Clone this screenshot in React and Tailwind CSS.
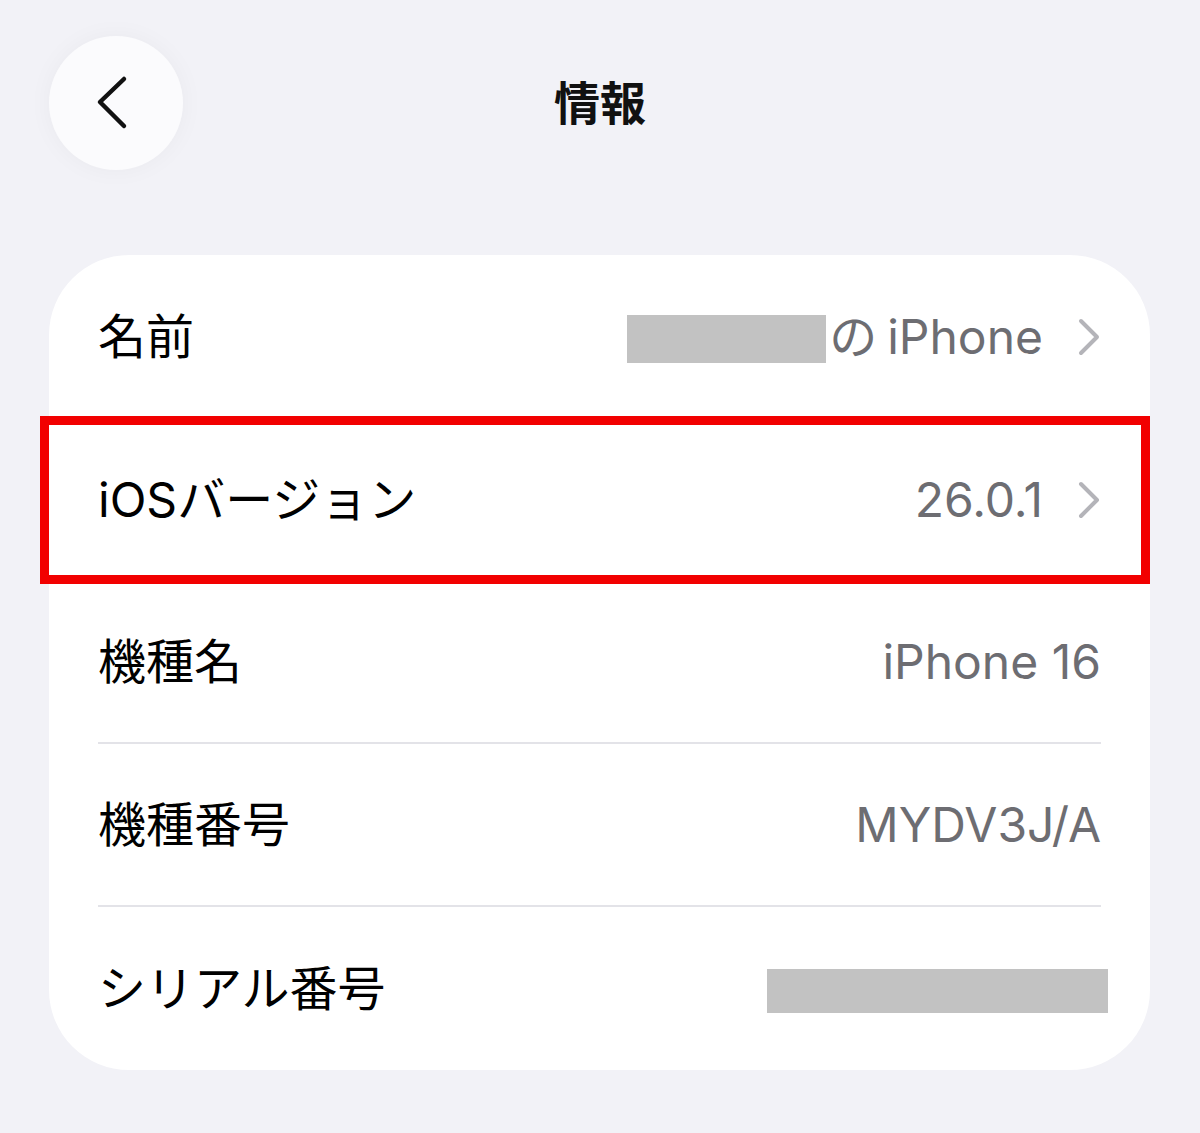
const font = { fontFamily: '"Inter", "Noto Sans CJK JP", sans-serif' };

function Chevron() {
  return (
    <svg width="24" height="38" viewBox="0 0 24 38" fill="none" stroke="#b4b4b9" strokeWidth="4" strokeLinecap="round" strokeLinejoin="round" className="ml-[34px] shrink-0">
      <polyline points="4,3 20,19 4,35" />
    </svg>
  );
}

function Row({ label, children, chevron, divider, highlight }) {
  return (
    <div className="relative h-[163px] px-[49px]">
      <div className={`flex h-full items-center justify-between ${divider ? 'border-b-2 border-[#e3e3e8]' : ''}`}>
        <span className="text-[48px] text-black">{label}</span>
        <div className="flex items-center">
          {children}
          {chevron && <Chevron />}
        </div>
      </div>
      {highlight && (
        <div className="absolute left-[-9px] right-0 top-[-2px] bottom-[-3px] border-[9px] border-[#f20000]" />
      )}
    </div>
  );
}

export default function App() {
  return (
    <div className="w-full h-[1133px] bg-[#f2f2f7] overflow-hidden" style={font}>
      {/* Header */}
      <div className="grid grid-cols-[1fr_auto_1fr] items-center pt-[36px] px-[49px]">
        <div>
          <button className="w-[134px] h-[134px] rounded-full bg-[#fbfbfd] flex items-center justify-center shadow-[0_0_24px_rgba(0,0,0,0.04)]">
            <svg width="40" height="56" viewBox="0 0 40 56" fill="none" stroke="#111" strokeWidth="4.5" strokeLinecap="round" strokeLinejoin="round" className="mr-[10px]">
              <polyline points="33,4 9,27 33,51" />
            </svg>
          </button>
        </div>
        <h1 className="text-[46px] font-bold text-[#111]">情報</h1>
        <div />
      </div>

      {/* Card */}
      <div className="mx-[49px] mt-[85px] w-[1101px] bg-white rounded-[80px]">
        <Row label="名前" chevron>
          <span className="w-[199px] h-[48px] bg-[#c2c2c2] mt-[5px]" />
          <span className="text-[48px] text-[#6d6d72] ml-[3px]">の</span>
          <span className="text-[48px] text-[#6d6d72] ml-[10px]">iPhone</span>
        </Row>
        <Row label="iOSバージョン" chevron highlight>
          <span className="text-[48px] text-[#6d6d72]">26.0.1</span>
        </Row>
        <Row label="機種名" divider>
          <span className="text-[48px] text-[#6d6d72]">iPhone 16</span>
        </Row>
        <Row label="機種番号" divider>
          <span className="text-[48px] text-[#6d6d72]">MYDV3J/A</span>
        </Row>
        <Row label="シリアル番号">
          <span className="w-[341px] h-[44px] bg-[#c2c2c2] mr-[-7px] mt-[4px]" />
        </Row>
      </div>
    </div>
  );
}
